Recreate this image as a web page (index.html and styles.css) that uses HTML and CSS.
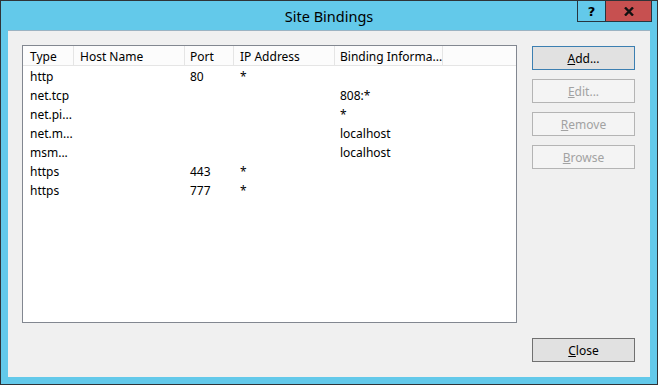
FILE: index.html
```html
<!DOCTYPE html>
<html lang="en">
<head>
<title>Site Bindings</title>
<meta charset="utf-8">
<link rel="stylesheet" href="styles.css">
</head>
<body>
	<div class="window">
		<div class="titlebar">
			<span></span>
			<span class="title">Site Bindings</span>
			<div class="caption">
				<span class="cap help">?</span>
				<span class="cap close">
					<svg width="10" height="9" viewBox="0 0 10 9"><path d="M1 0.5 L9 8.5 M9 0.5 L1 8.5" stroke="#111" stroke-width="2.4"/></svg>
				</span>
			</div>
		</div>

		<div class="client">
			<div class="listbox">
				<div class="row head">
					<span>Type</span><span>Host Name</span><span>Port</span><span>IP Address</span><span>Binding Informa...</span><span class="rest"></span>
				</div>
				<div class="row"><span>http</span><span></span><span>80</span><span>*</span><span></span></div>
				<div class="row"><span>net.tcp</span><span></span><span></span><span></span><span>808:*</span></div>
				<div class="row"><span>net.pi...</span><span></span><span></span><span></span><span>*</span></div>
				<div class="row"><span>net.m...</span><span></span><span></span><span></span><span>localhost</span></div>
				<div class="row"><span>msm...</span><span></span><span></span><span></span><span>localhost</span></div>
				<div class="row"><span>https</span><span></span><span>443</span><span>*</span><span></span></div>
				<div class="row"><span>https</span><span></span><span>777</span><span>*</span><span></span></div>
			</div>

			<div class="side">
				<button class="btn default"><u>A</u>dd...</button>
				<button class="btn" disabled><u>E</u>dit...</button>
				<button class="btn" disabled><u>R</u>emove</button>
				<button class="btn" disabled><u>B</u>rowse</button>
			</div>

			<div class="bottom">
				<button class="btn closebtn"><u>C</u>lose</button>
			</div>
		</div>
	</div>
</body>
</html>
```

FILE: styles.css
```css
body{
	margin: 0;
	font-family: "Noto Sans", "Open Sans", sans-serif;
	font-size: 12px;
	color: #000;
}
.window{
	width: 658px;
	height: 385px;
	box-sizing: border-box;
	border: 1px solid #2f3337;
	background: #63c9ea;
	display: flex;
	flex-direction: column;
}
.titlebar{
	height: 29px;
	display: grid;
	grid-template-columns: 1fr auto 1fr;
}
.title{
	font-size: 14.5px;
	line-height: 29px;
	padding-top: 1px;
	color: #000;
}
.caption{
	display: flex;
	justify-content: flex-end;
	align-items: flex-start;
	margin-right: 5px;
}
.cap{
	height: 20px;
	display: flex;
	align-items: center;
	justify-content: center;
	border-bottom: 1px solid #27353f;
	border-right: 1px solid #27353f;
}
.help{
	width: 27px;
	border-left: 1px solid #27353f;
	font-weight: bold;
	font-size: 13px;
	font-family: "DejaVu Sans", sans-serif;
}
.close{
	width: 45px;
	background: #c75050;
}

/* client area */
.client{
	flex: 1;
	margin: 0 7px 7px 7px;
	background: #f0f0f0;
	border-top: 1px solid #9cb3c2;
	padding: 14px 15px 15px 14px;
	display: grid;
	grid-template-columns: 1fr 103px;
	grid-template-rows: 1fr 24px;
	column-gap: 15px;
	row-gap: 15px;
}
.listbox{
	background: #fff;
	border: 1px solid #828790;
}
.row{
	display: grid;
	grid-template-columns: 51px 111px 49px 101px 108px 1fr;
	height: 19px;
	line-height: 21px;
}
.row span{
	padding-left: 6px;
	white-space: nowrap;
	overflow: hidden;
}
.row span:first-child{ padding-left: 7px; }
.head{
	background: #fcfcfc;
	border-bottom: 1px solid #e5e5e5;
	line-height: 21px;
}
.head span{ border-right: 1px solid #e5e5e5; }
.head span:nth-child(3), .head span:nth-child(5){ padding-left: 5px; }
.head .rest{ border-right: none; }
.row span:nth-child(3), .row span:nth-child(5){ padding-left: 5px; }

.side{
	display: flex;
	flex-direction: column;
	gap: 9px;
	padding-top: 1px;
}
.bottom{
	grid-column: 2;
}
.btn{
	height: 24px;
	width: 103px;
	box-sizing: border-box;
	font-family: "Noto Sans", "Open Sans", sans-serif;
	font-size: 12px;
	color: #000;
	background: #e1e1e1;
	border: 1px solid #adadad;
	padding: 1px 0 0 0;
}
.btn.default{ border-color: #3c7fb1; }
.btn:disabled{
	background: #f4f4f4;
	border-color: #b4b4b4;
	color: #a2a2a2;
}
.closebtn{ border-color: #707070; }
```
